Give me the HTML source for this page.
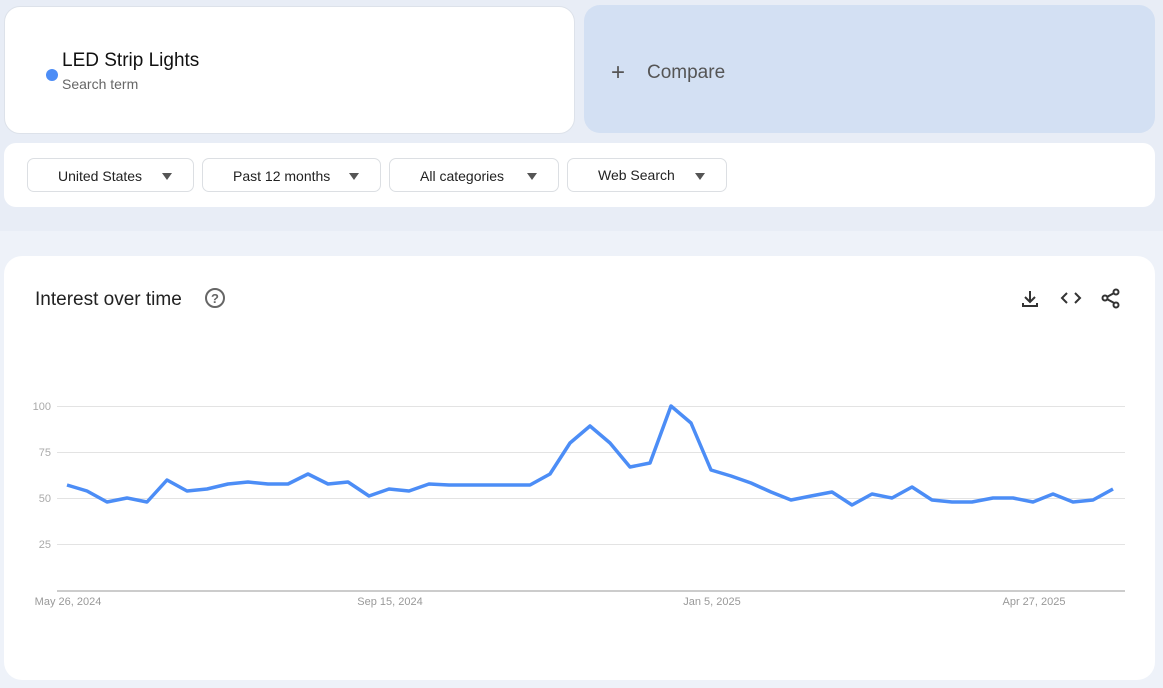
<!DOCTYPE html><html><head><style>
body{margin:0;width:1163px;height:688px;background:#eef2f9;font-family:"Liberation Sans",sans-serif;position:relative;overflow:hidden}
.top{position:absolute;left:0;top:0;width:1163px;height:231px;background:#e8edf6}
.card{position:absolute;background:#fff;border-radius:16px}
.btn{position:absolute;top:158px;height:34px;border:1px solid #dcdfe3;border-radius:7px;font-size:14px;color:#222;line-height:34px;box-sizing:border-box;padding-left:30px}
.btn:after{content:"";position:absolute;top:14px;right:21px;border-left:5px solid transparent;border-right:5px solid transparent;border-top:7px solid #555}
</style></head><body>
<div class="top"></div>
<div class="card" style="left:4px;top:6px;width:571px;height:128px;border:1px solid #dde2ea;box-sizing:border-box"></div>
<div style="position:absolute;left:46px;top:69px;width:12px;height:12px;border-radius:50%;background:#4d8df6"></div>
<div style="position:absolute;left:62px;top:50px;font-size:19px;color:#111">LED Strip Lights</div>
<div style="position:absolute;left:62px;top:76px;font-size:14px;color:#666">Search term</div>
<div style="position:absolute;left:584px;top:5px;width:571px;height:128px;border-radius:16px;background:#d3e0f3"></div>
<div style="position:absolute;left:611px;top:59px;font-size:24px;color:#555">+</div>
<div style="position:absolute;left:647px;top:62px;font-size:19px;color:#555">Compare</div>
<div class="card" style="left:4px;top:143px;width:1151px;height:64px;border-radius:12px"></div>
<div class="btn" style="left:27px;width:167px">United States</div>
<div class="btn" style="left:202px;width:179px">Past 12 months</div>
<div class="btn" style="left:389px;width:170px">All categories</div>
<div class="btn" style="left:567px;width:160px;line-height:32px">Web Search</div>
<div class="card" style="left:4px;top:256px;width:1151px;height:424px;border-radius:18px"></div>
<div style="position:absolute;left:35px;top:289px;font-size:19px;color:#222">Interest over time</div>
<svg style="position:absolute;left:0;top:0" width="1163" height="688">
<circle cx="215" cy="298" r="9" fill="none" stroke="#666" stroke-width="2"/>
<text x="215" y="303" font-size="13" font-weight="bold" text-anchor="middle" fill="#666" font-family="Liberation Sans">?</text>
<g stroke="#333" stroke-width="2" fill="none">
<path d="M1030 291v11M1025 297l5 5 5-5M1023 303v3h14v-3"/>
<path d="M1067 293l-5 5 5 5M1075 293l5 5-5 5"/>
<path d="M1116 292l-11 6 11 6"/></g>
<g fill="#fff" stroke="#333" stroke-width="2"><circle cx="1116" cy="292" r="2.5"/><circle cx="1105" cy="298" r="2.5"/><circle cx="1116" cy="305" r="2.5"/></g>
<g stroke="#e3e3e3" stroke-width="1"><line x1="57" x2="1125" y1="406.5" y2="406.5"/><line x1="57" x2="1125" y1="452.5" y2="452.5"/><line x1="57" x2="1125" y1="498.5" y2="498.5"/><line x1="57" x2="1125" y1="544.5" y2="544.5"/></g>
<line x1="57" x2="1125" y1="591" y2="591" stroke="#999" stroke-width="1"/>
<g font-size="11" fill="#aaa" font-family="Liberation Sans" text-anchor="end"><text x="51" y="410">100</text><text x="51" y="456">75</text><text x="51" y="502">50</text><text x="51" y="548">25</text></g>
<g font-size="11" fill="#999" font-family="Liberation Sans" text-anchor="middle"><text x="68" y="605">May 26, 2024</text><text x="390" y="605">Sep 15, 2024</text><text x="712" y="605">Jan 5, 2025</text><text x="1034" y="605">Apr 27, 2025</text></g>
<polyline fill="none" stroke="#4c8df6" stroke-width="3.5" stroke-linejoin="round" points="67,485 87,491 107,502 127,498 147,502 167,480 187,491 207,489 228,484 248,482 268,484 288,484 308,474 328,484 348,482 369,496 389,489 409,491 429,484 449,485 469,485 489,485 509,485 530,485 550,474 570,443 590,426 610,443 630,467 650,463 671,406 691,423 711,470 731,476 751,483 771,492 791,500 811,496 832,492 852,505 872,494 892,498 912,487 932,500 952,502 972,502 993,498 1013,498 1033,502 1053,494 1073,502 1093,500 1113,489"/>
</svg>
</body></html>
